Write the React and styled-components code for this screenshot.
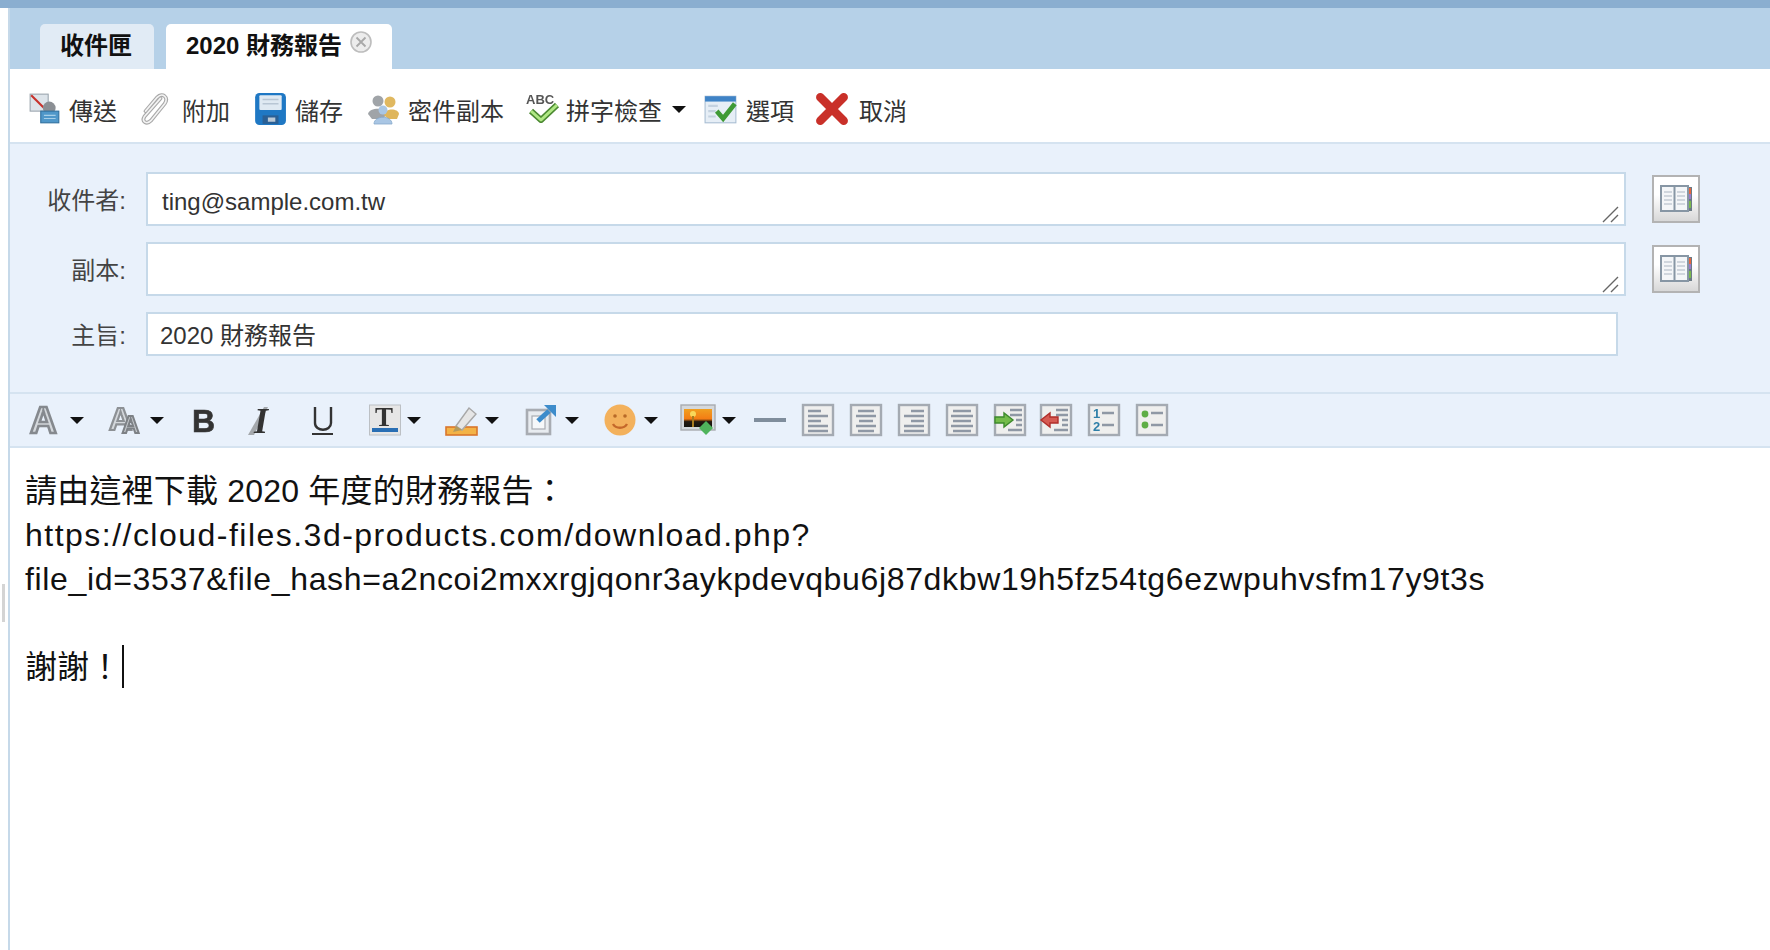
import React from 'react';
import styled, { createGlobalStyle } from 'styled-components';

const GlobalStyle = createGlobalStyle`
    html, body {
        margin: 0;
        padding: 0;
        height: 100%;
        background: #fff;
        overflow: hidden;
    }
    body {
        font-family: "Liberation Sans", "Noto Sans CJK TC", sans-serif;
    }
`;

const Page = styled.div`
    display: flex;
    flex-direction: column;
    width: 1770px;
    height: 950px;
    overflow: hidden;
`;

const TopStrip = styled.div`
    height: 8px;
    flex: none;
    background: #8aaed0;
`;

const Columns = styled.div`
    display: flex;
    flex: 1;
    min-height: 0;
`;

const Gutter = styled.div`
    flex: none;
    width: 8px;
    padding: 576px 0 0 2px;
    box-sizing: border-box;
`;

const SplitHandle = styled.div`
    width: 3px;
    height: 38px;
    background: #d4d4d4;
`;

const Main = styled.div`
    flex: 1;
    display: flex;
    flex-direction: column;
    border-left: 2px solid #c6d9e9;
    min-width: 0;
`;

const TabBar = styled.div`
    display: flex;
    align-items: flex-end;
    gap: 12px;
    height: 61px;
    flex: none;
    box-sizing: border-box;
    padding-left: 30px;
    background: #b6d1e8;
`;

const Tab = styled.div`
    display: flex;
    align-items: center;
    height: ${p => (p.$active ? 46 : 45)}px;
    margin-bottom: ${p => (p.$active ? -1 : 0)}px;
    padding: ${p => (p.$active ? '0 19px 7px 20px' : '0 22px 7px 20px')};
    box-sizing: border-box;
    border-radius: 5px 5px 0 0;
    background: ${p => (p.$active ? '#fff' : '#e1ebf5')};
    color: #111;
    font-size: 24px;
    font-weight: 700;
    position: relative;
`;

const TabClose = styled.svg`
    width: 24px;
    height: 24px;
    margin: -3px 0 0 7px;
`;

const MainToolbar = styled.div`
    display: flex;
    align-items: center;
    height: 73px;
    flex: none;
    box-sizing: border-box;
    padding: 2px 0 0 18px;
    background: #fff;
    color: #333;
    font-size: 24px;
`;

const ToolItem = styled.div`
    display: flex;
    align-items: center;
    margin-left: ${p => p.$ml || 0}px;
    white-space: nowrap;
`;

const ToolLabel = styled.span`
    padding-top: 5px;
`;

const ToolIcon = styled.svg`
    width: 34px;
    height: 34px;
    margin: 4px ${p => p.$mr ?? 8}px 0 0;
    flex: none;
    filter: blur(0.4px);
`;

const Caret = styled.span`
    flex: none;
    width: 0;
    height: 0;
    margin: ${p => p.$mt ?? 0}px 0 0 ${p => p.$ml ?? 10}px;
    border-left: 7px solid transparent;
    border-right: 7px solid transparent;
    border-top: 7px solid #111;
`;

const HeaderForm = styled.div`
    flex: none;
    height: 252px;
    box-sizing: border-box;
    padding-top: 28px;
    background: #e9f1fb;
    border-top: 2px solid #d5e3f0;
    border-bottom: 2px solid #d5e3f0;
    display: flex;
    flex-direction: column;
`;

const FormRow = styled.div`
    display: flex;
    align-items: center;
    margin-bottom: ${p => p.$mb ?? 16}px;
`;

const FieldLabel = styled.div`
    flex: none;
    width: 136px;
    padding: 0 20px 2px 0;
    box-sizing: border-box;
    text-align: right;
    color: #444;
    font-size: 24px;
`;

const Field = styled.div`
    position: relative;
    box-sizing: border-box;
    flex: none;
    width: ${p => p.$width}px;
    height: ${p => p.$height}px;
    padding: ${p => p.$pad};
    display: flex;
    align-items: center;
    background: #fff;
    border: 2px solid #c6d9e9;
    color: #333;
    font-size: 24px;
`;

const ResizeGrip = styled.svg`
    position: absolute;
    right: 4px;
    bottom: 1px;
    width: 18px;
    height: 18px;
`;

const BookButton = styled.div`
    flex: none;
    box-sizing: border-box;
    width: 48px;
    height: 48px;
    margin-left: 26px;
    display: flex;
    align-items: center;
    justify-content: center;
    border: 2px solid #b3b3b3;
    background: linear-gradient(#ffffff 40%, #d8d8d8);
`;

const EditorBar = styled.div`
    flex: none;
    display: flex;
    align-items: center;
    height: 54px;
    box-sizing: border-box;
    padding-left: 18px;
    background: #e9f1fb;
    border-bottom: 2px solid #d5e3f0;
`;

const EditButton = styled.div`
    display: flex;
    align-items: center;
    flex: none;
    margin-left: ${p => p.$ml || 0}px;
`;

const EditIcon = styled.svg`
    width: ${p => p.$w || 32}px;
    height: 32px;
    flex: none;
    overflow: visible;
    filter: blur(0.5px);
`;

const Body = styled.div`
    flex: 1;
    padding: 21px 0 0 15px;
    background: #fff;
    color: #111;
    font-size: 32px;
    line-height: 44px;
`;

const BodyLine = styled.div`
    min-height: 44px;
    white-space: nowrap;
    letter-spacing: ${p => p.$track || 0}px;
`;

const TextCursor = styled.span`
    display: inline-block;
    width: 2px;
    height: 43px;
    margin-left: 1px;
    vertical-align: top;
    background: #111;
`;

/* toolbar pictures */
const SendIcon = () => (
    <ToolIcon viewBox="0 0 32 32" $mr={7}>
        <rect x="2" y="2" width="17" height="16" fill="#dde4ea" stroke="#9aa4ad" />
        <path d="M3 3 L17 17" stroke="#c8322c" strokeWidth="2" />
        <circle cx="20" cy="15" r="6" fill="#8b8f94" />
        <rect x="12" y="18" width="17" height="11" fill="#4f97c9" stroke="#2e6f9e" />
        <path d="M15 22h11M15 25h11" stroke="#a6cfe8" strokeWidth="1" />
    </ToolIcon>
);

const clipPath = 'M23 6 L8 23 C5 28 10 31 14 27 L27 11 C31 5 25 0 20 5 L9 18';

const AttachIcon = () => (
    <ToolIcon viewBox="0 0 32 32" $mr={12}>
        <path d={clipPath} fill="none" stroke="#a9a9a9" strokeWidth="3.6" strokeLinecap="round" />
        <path d={clipPath} fill="none" stroke="#f4f4f4" strokeWidth="1.5" strokeLinecap="round" />
    </ToolIcon>
);

const SaveIcon = () => (
    <ToolIcon viewBox="0 0 32 32" $mr={8}>
        <rect x="2" y="1" width="29" height="30" rx="4" fill="#1f78c4" />
        <rect x="6" y="3" width="21" height="14" rx="1" fill="#dfe9f2" />
        <path d="M9 7h15M9 11h15" stroke="#b8c6d4" strokeWidth="1.4" />
        <rect x="9" y="22" width="15" height="8" fill="#2a5f94" />
        <rect x="14" y="24" width="7" height="4" fill="#b9c8d6" />
    </ToolIcon>
);

const CopyIcon = () => (
    <ToolIcon viewBox="0 0 34 32" $mr={8}>
        <circle cx="12" cy="8" r="5.5" fill="#a0a4a8" />
        <path d="M2 21 C3 14 21 14 22 21 L16 26 H6 Z" fill="#a0a4a8" />
        <circle cx="24" cy="9" r="5.5" fill="#e0b860" />
        <path d="M18 22 C19 15 32 15 33 21 L31 26 H22 Z" fill="#dfb65c" />
        <circle cx="17" cy="17" r="4.5" fill="#a9c6e4" />
        <path d="M8 31 C8 22 26 22 26 31 Z" fill="#a9c6e4" stroke="#85a8ca" strokeWidth="0.8" />
    </ToolIcon>
);

const SpellIcon = () => (
    <ToolIcon viewBox="0 0 34 32" $mr={6}>
        <text x="0" y="11" fontFamily="Liberation Sans" fontWeight="700" fontSize="13" fill="#555">ABC</text>
        <path d="M5 18 L15 27 L31 12" fill="none" stroke="#4c8a32" strokeWidth="6" strokeLinejoin="round" />
        <path d="M5 18 L15 27 L31 12" fill="none" stroke="#b0e884" strokeWidth="3" strokeLinejoin="round" />
    </ToolIcon>
);

const OptionIcon = () => (
    <ToolIcon viewBox="0 0 32 32" $mr={8}>
        <rect x="1" y="4" width="29" height="25" fill="#e6eef6" stroke="#a8bdd2" />
        <rect x="1" y="4" width="29" height="5" fill="#3f83c6" />
        <path d="M4 13h9M4 18h7M4 23h7" stroke="#c4d2e0" strokeWidth="2" />
        <path d="M12 18 L18 25 L29 11" fill="none" stroke="#3f9a36" strokeWidth="4.4" />
    </ToolIcon>
);

const CancelIcon = () => (
    <ToolIcon viewBox="0 0 32 32" $mr={10}>
        <path d="M5 5 L27 27 M27 5 L5 27" stroke="#c93029" strokeWidth="8" strokeLinecap="round" />
    </ToolIcon>
);

const BookIcon = () => (
    <svg width="32" height="30" viewBox="0 0 32 30">
        <rect x="27" y="3" width="5" height="24" fill="#6b7a86" />
        <rect x="27" y="4" width="4" height="6" fill="#e8663c" />
        <rect x="27" y="10" width="4" height="5" fill="#9a7ac8" />
        <rect x="27" y="17" width="4" height="7" fill="#7ab84c" />
        <rect x="1" y="2" width="27" height="25" fill="#f4f6f8" stroke="#8796a4" strokeWidth="2" />
        <path d="M14.5 2v25" stroke="#8796a4" strokeWidth="2" />
        <path d="M4 8h8M4 12h8M4 16h8M4 20h8M17 8h8M17 12h8M17 16h8M17 20h8" stroke="#c4ccd4" strokeWidth="1.6" />
    </svg>
);

const LetterA = () => (
    <EditIcon viewBox="0 0 32 32">
        <text x="2" y="29" fontFamily="Liberation Sans" fontWeight="700" fontSize="37" fill="#d4d8dc" stroke="#85898e" strokeWidth="2.6">A</text>
    </EditIcon>
);

const LetterAA = () => (
    <EditIcon viewBox="0 0 32 32">
        <text x="-1" y="26" fontFamily="Liberation Sans" fontWeight="700" fontSize="32" fill="#d4d8dc" stroke="#8d9195" strokeWidth="2.2">A</text>
        <text x="12" y="29" fontFamily="Liberation Sans" fontWeight="700" fontSize="24" fill="#c4c8cc" stroke="#7d8185" strokeWidth="2">A</text>
    </EditIcon>
);

const LetterB = () => (
    <EditIcon viewBox="0 0 32 32">
        <text x="5" y="28" fontFamily="Liberation Sans" fontWeight="700" fontSize="32" fill="#333" stroke="#333" strokeWidth="0.6">B</text>
    </EditIcon>
);

const LetterI = () => (
    <EditIcon viewBox="0 0 32 32">
        <path d="M21 3 L5 31 H11 L25 3 Z" fill="#a4a8ac" />
        <text x="11" y="29" fontFamily="Liberation Serif" fontStyle="italic" fontWeight="700" fontSize="36" fill="#333">I</text>
    </EditIcon>
);

const LetterU = () => (
    <EditIcon viewBox="0 0 32 32">
        <path d="M8 3 V19 C8 28 24 28 24 19 V3" fill="none" stroke="#333" strokeWidth="2.4" />
        <path d="M5 30h21" stroke="#333" strokeWidth="2" />
    </EditIcon>
);

const FontColor = () => (
    <EditIcon viewBox="0 0 32 32">
        <rect x="0.5" y="1" width="31" height="30" fill="#e6e6e6" stroke="#bcc0c4" />
        <text x="6" y="22" fontFamily="Liberation Serif" fontWeight="700" fontSize="27" fill="#333">T</text>
        <rect x="3" y="24" width="26" height="4" fill="#2a6fb4" />
    </EditIcon>
);

const Highlight = () => (
    <EditIcon viewBox="0 0 32 32">
        <rect x="1" y="23" width="31" height="8" fill="#f3b347" stroke="#d9762c" strokeWidth="1.6" />
        <path d="M11 22 L24 4 L31 10 L17 26 Z" fill="#e6e6e6" stroke="#a8a8a8" strokeWidth="1.4" />
        <path d="M11 22 L8 28 L17 26 Z" fill="#b49a5c" />
    </EditIcon>
);

const ShareOut = () => (
    <EditIcon viewBox="0 0 32 32">
        <rect x="2" y="6" width="23" height="24" fill="#e8ecf0" stroke="#a8acb2" strokeWidth="2.6" />
        <rect x="7" y="12" width="13" height="13" fill="#f6f8fa" stroke="#a8acb2" strokeWidth="1.2" />
        <path d="M13 17 L24 7" stroke="#3d8ccb" strokeWidth="5" />
        <path d="M19 1 H31 V13 Z" fill="#3d8ccb" />
    </EditIcon>
);

const Smiley = () => (
    <EditIcon viewBox="0 0 32 32">
        <circle cx="16" cy="16" r="15.5" fill="#f3b15c" />
        <circle cx="11" cy="12" r="1.8" fill="#b86a28" />
        <circle cx="21" cy="12" r="1.8" fill="#b86a28" />
        <path d="M9 20 C12 25 20 25 23 20" fill="none" stroke="#c4682a" strokeWidth="2.4" />
    </EditIcon>
);

const PictureIcon = () => (
    <EditIcon viewBox="0 0 36 32" $w={36}>
        <defs>
            <linearGradient id="sunset" x1="0" y1="0" x2="0" y2="1">
                <stop offset="0" stopColor="#f0a020" />
                <stop offset="0.55" stopColor="#f47c14" />
                <stop offset="0.7" stopColor="#241a10" />
                <stop offset="1" stopColor="#15130f" />
            </linearGradient>
        </defs>
        <rect x="1" y="1" width="34" height="25" fill="#d4d8dc" stroke="#a8acb0" strokeWidth="1.4" />
        <rect x="4" y="5" width="28" height="18" fill="url(#sunset)" />
        <circle cx="13" cy="10" r="3" fill="#f8d85a" />
        <path d="M13 12v11" stroke="#a87c20" strokeWidth="2" />
        <path d="M26 17 L33 24 L26 31 L19 24 Z" fill="#4fb45c" />
    </EditIcon>
);

const HorizontalRule = () => (
    <EditIcon viewBox="0 0 32 32">
        <rect x="0" y="14" width="32" height="4" fill="#7f8d9c" />
    </EditIcon>
);

// widths of the four text lines in a paragraph icon, with how they are lined up
const alignPaths = {
    left: 'M6 7h13M6 12h20M6 17h13M6 22h20M6 27h20',
    center: 'M8 7h16M6 12h20M9 17h14M6 22h20M8 27h16',
    right: 'M13 7h13M6 12h20M13 17h13M6 22h20M6 27h20',
    full: 'M7 7h18M5 12h22M7 17h18M5 22h22M7 27h18',
};

const ParagraphBox = ({ children }) => (
    <EditIcon viewBox="0 0 32 32">
        <rect x="1" y="1" width="30" height="30" fill="#efefee" stroke="#a4aab2" strokeWidth="2.4" />
        {children}
    </EditIcon>
);

const AlignIcon = ({ kind }) => (
    <ParagraphBox>
        <path d={alignPaths[kind]} stroke="#8f98a5" strokeWidth="2.6" />
    </ParagraphBox>
);

const IndentIcon = () => (
    <ParagraphBox>
        <path d="M16 6h12M16 11h12M22 16h6M22 21h6M14 26h14" stroke="#8f98a5" strokeWidth="2.4" />
        <path d="M1 13h9V9l9 7-9 7v-4H1Z" fill="#74bc4a" stroke="#3d8a2c" strokeWidth="1.4" />
    </ParagraphBox>
);

const OutdentIcon = () => (
    <ParagraphBox>
        <path d="M16 6h12M16 11h12M22 16h6M22 21h6M14 26h14" stroke="#8f98a5" strokeWidth="2.4" />
        <path d="M18 13h-8V9l-9 7 9 7v-4h8Z" fill="#d65a52" stroke="#b02e2a" strokeWidth="1.4" />
    </ParagraphBox>
);

const OrderedIcon = () => (
    <ParagraphBox>
        <text x="5" y="14" fontFamily="Liberation Sans" fontWeight="700" fontSize="13" fill="#2f7fa8">1</text>
        <text x="5" y="27" fontFamily="Liberation Sans" fontWeight="700" fontSize="13" fill="#2f7fa8">2</text>
        <path d="M14 9h12M14 21h12" stroke="#8f98a5" strokeWidth="2.6" />
    </ParagraphBox>
);

const BulletIcon = () => (
    <ParagraphBox>
        <circle cx="9" cy="10" r="3.4" fill="#5fae46" />
        <circle cx="9" cy="21" r="3.4" fill="#5fae46" />
        <path d="M15 9h12M15 21h12" stroke="#8f98a5" strokeWidth="2.6" />
    </ParagraphBox>
);

const mainTools = [
    { icon: <SendIcon />, label: '傳送' },
    { icon: <AttachIcon />, label: '附加', ml: 19 },
    { icon: <SaveIcon />, label: '儲存', ml: 23 },
    { icon: <CopyIcon />, label: '密件副本', ml: 23 },
    { icon: <SpellIcon />, label: '拼字檢查', ml: 22, caret: true },
    { icon: <OptionIcon />, label: '選項', ml: 18 },
    { icon: <CancelIcon />, label: '取消', ml: 21 },
];

const editTools = [
    { icon: <LetterA />, caret: 10 },
    { icon: <LetterAA />, ml: 26, caret: 8 },
    { icon: <LetterB />, ml: 23 },
    { icon: <LetterI />, ml: 24 },
    { icon: <LetterU />, ml: 32 },
    { icon: <FontColor />, ml: 30, caret: 6 },
    { icon: <Highlight />, ml: 24, caret: 8 },
    { icon: <ShareOut />, ml: 26, caret: 8 },
    { icon: <Smiley />, ml: 25, caret: 8 },
    { icon: <PictureIcon />, ml: 22, caret: 6 },
    { icon: <HorizontalRule />, ml: 18 },
    { icon: <AlignIcon kind="left" />, ml: 16 },
    { icon: <AlignIcon kind="center" />, ml: 16 },
    { icon: <AlignIcon kind="right" />, ml: 16 },
    { icon: <AlignIcon kind="full" />, ml: 16 },
    { icon: <IndentIcon />, ml: 16 },
    { icon: <OutdentIcon />, ml: 14 },
    { icon: <OrderedIcon />, ml: 16 },
    { icon: <BulletIcon />, ml: 16 },
];

const Grip = () => (
    <ResizeGrip viewBox="0 0 18 18">
        <path d="M1 17 L16 2 M9 17 L16 10" stroke="#666" strokeWidth="1.4" />
    </ResizeGrip>
);

const App = () => {
    return (
        <Page>
            <GlobalStyle />
            <TopStrip />
            <Columns>
                <Gutter>
                    <SplitHandle />
                </Gutter>
                <Main>
                    <TabBar>
                        <Tab>收件匣</Tab>
                        <Tab $active>
                            2020 財務報告
                            <TabClose viewBox="0 0 24 24">
                                <circle cx="12" cy="12" r="10" fill="#ececec" stroke="#bdbdbd" strokeWidth="1.6" />
                                <path d="M7.5 7.5 L16.5 16.5 M16.5 7.5 L7.5 16.5" stroke="#a8a8a8" strokeWidth="1.8" />
                            </TabClose>
                        </Tab>
                    </TabBar>
                    <MainToolbar>
                        {mainTools.map(tool => (
                            <ToolItem key={tool.label} $ml={tool.ml}>
                                {tool.icon}
                                <ToolLabel>{tool.label}</ToolLabel>
                                {tool.caret && <Caret $ml={10} $mt={6} />}
                            </ToolItem>
                        ))}
                    </MainToolbar>
                    <HeaderForm>
                        <FormRow>
                            <FieldLabel>收件者:</FieldLabel>
                            <Field $width={1480} $height={54} $pad="5px 0 0 14px">
                                ting@sample.com.tw
                                <Grip />
                            </Field>
                            <BookButton><BookIcon /></BookButton>
                        </FormRow>
                        <FormRow>
                            <FieldLabel>副本:</FieldLabel>
                            <Field $width={1480} $height={54} $pad="5px 0 0 14px">
                                <Grip />
                            </Field>
                            <BookButton><BookIcon /></BookButton>
                        </FormRow>
                        <FormRow $mb={0}>
                            <FieldLabel>主旨:</FieldLabel>
                            <Field $width={1472} $height={44} $pad="0 0 2px 12px">2020 財務報告</Field>
                        </FormRow>
                    </HeaderForm>
                    <EditorBar>
                        {editTools.map((tool, i) => (
                            <EditButton key={i} $ml={tool.ml}>
                                {tool.icon}
                                {tool.caret !== undefined && <Caret $ml={tool.caret} />}
                            </EditButton>
                        ))}
                    </EditorBar>
                    <Body>
                        <BodyLine $track={0.2}>請由這裡下載 2020 年度的財務報告：</BodyLine>
                        <BodyLine $track={1.48}>https://cloud-files.3d-products.com/download.php?</BodyLine>
                        <BodyLine $track={0.65}>file_id=3537&amp;file_hash=a2ncoi2mxxrgjqonr3aykpdevqbu6j87dkbw19h5fz54tg6ezwpuhvsfm17y9t3s</BodyLine>
                        <BodyLine />
                        <BodyLine>謝謝！<TextCursor /></BodyLine>
                    </Body>
                </Main>
            </Columns>
        </Page>
    );
};

export default App;
